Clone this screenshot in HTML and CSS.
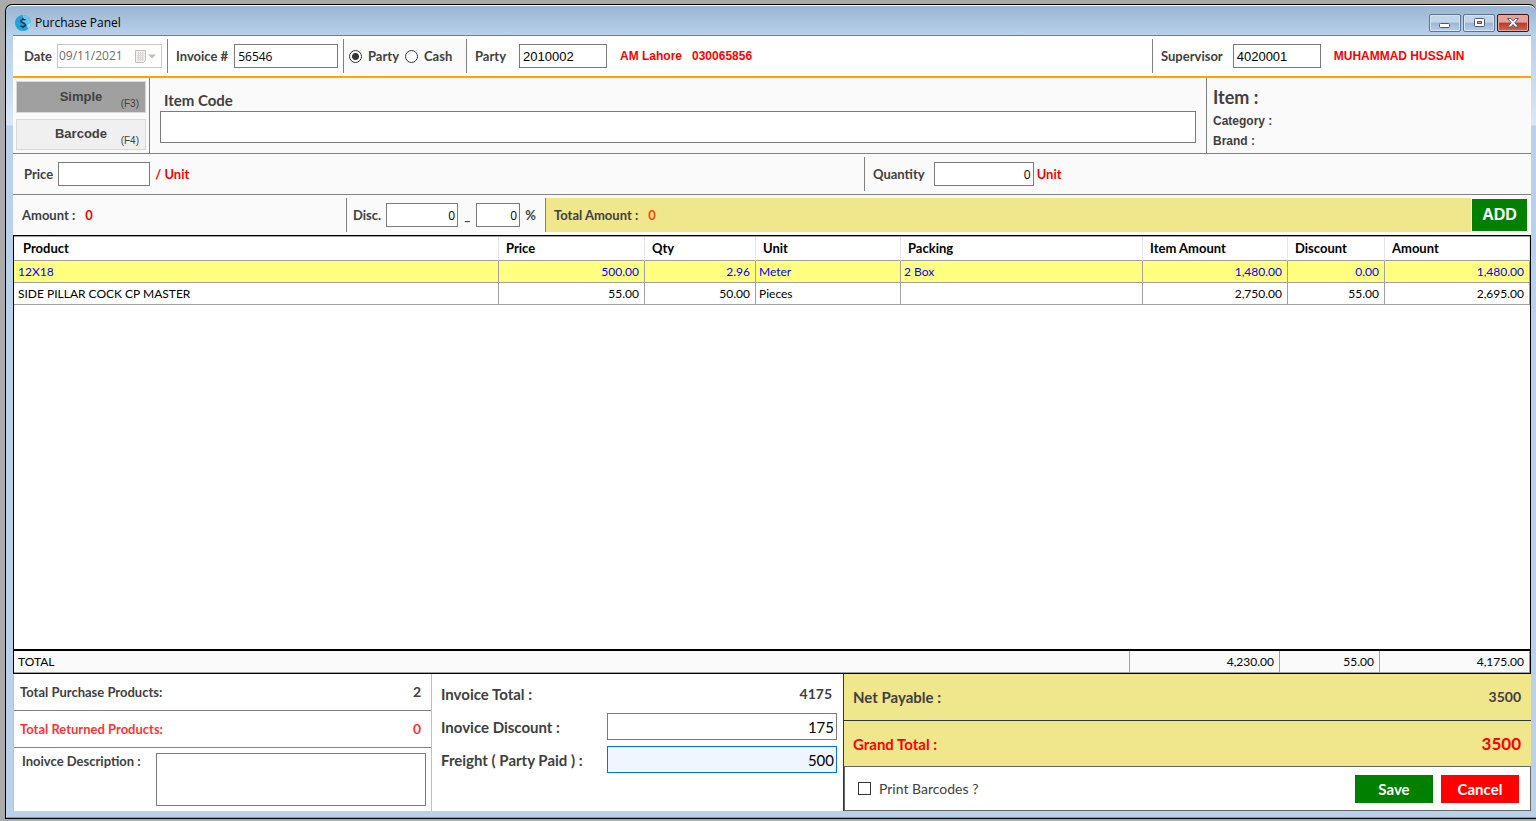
FILE: index.html
```html
<!DOCTYPE html>
<html lang="en">
  <head>
    <meta charset="UTF-8" />
    <meta name="viewport" content="width=device-width, initial-scale=1.0" />
    <title>Purchase Panel</title>
    <link rel="stylesheet" href="styles.css">
  </head>
  <body>
    <div class="window">
      <header class="titlebar">
        <svg class="logo" width="16" height="16" viewBox="0 0 16 16">
          <circle cx="8" cy="8" r="8" fill="#1fa3d8" />
          <path d="M8 0a8 8 0 0 1 8 8l-3 2-5-2z" fill="#6cc5e8" />
          <path d="M16 8a8 8 0 0 1-3 6l-1-4z" fill="#b5e0f2" />
          <path d="M10.4 5.2C9.8 4.2 6 3.8 5.8 6c-.1 2 4.7 1.6 4.6 3.9C10.3 12 6.4 12 5.4 10.6M8 3v1.5M8 11.500V13" fill="none" stroke="#16365c" stroke-width="1.5" />
        </svg>
        <span class="title">Purchase Panel</span>
        <div class="win-buttons">
          <button class="win-btn" type="button" aria-label="Minimize">
            <svg width="12" height="10" viewBox="0 0 12 10"><rect x="0.5" y="5.5" width="10" height="4" rx="1" fill="#fff" stroke="#535666" /></svg>
          </button>
          <button class="win-btn" type="button" aria-label="Maximize">
            <svg width="11" height="10" viewBox="0 0 11 10"><rect x="0.5" y="0.5" width="10" height="8" rx="1" fill="#fff" stroke="#535666" /><rect x="3.5" y="3.5" width="4" height="2" fill="#9fb9d6" stroke="#535666" /></svg>
          </button>
          <button class="win-btn close" type="button" aria-label="Close">
            <svg width="12" height="10" viewBox="0 0 12 10"><path d="M.5.5h3.200L6 2.900 8.300.5h3.200L7.900 4.700l3.600 4.300H8.200L6 6.600 3.800 9H.5l3.600-4.300z" fill="#fff" stroke="#535666" /></svg>
          </button>
        </div>
      </header>

      <main class="content">
        <section class="row invoice-row">
          <div class="seg date-seg">
            <label for="date">Date</label>
            <div class="date-box">
              <input id="date" type="text" value="09/11/2021" disabled />
              <svg width="21" height="13" viewBox="0 0 21 13">
                <path d="M.5.5h10v10l-2 2h-8z" fill="#f4f0f0" stroke="#c4bcbc" />
                <path d="M2 3.500h7M2 5.500h7M2 7.500h7M2 9.500h7M3.500 2v9M5.500 2v9M7.500 2v9" stroke="#ddd6d6" />
                <path d="M13 4.500h8l-4 4z" fill="#bfbfb8" />
              </svg>
            </div>
          </div>
          <div class="seg invoice-seg">
            <label for="invoice">Invoice #</label>
            <input id="invoice" class="box wide-digits" type="text" value="56546" />
          </div>
          <div class="seg type-seg">
            <input id="typeParty" type="radio" name="type" checked />
            <label for="typeParty">Party</label>
            <input id="typeCash" type="radio" name="type" />
            <label for="typeCash">Cash</label>
          </div>
          <div class="seg party-seg">
            <label for="party">Party</label>
            <input id="party" class="box code" type="text" value="2010002" />
            <span class="account">AM Lahore &nbsp; 030065856</span>
          </div>
          <div class="seg supervisor-seg">
            <label for="supervisor">Supervisor</label>
            <input id="supervisor" class="box code" type="text" value="4020001" />
            <span class="account">MUHAMMAD HUSSAIN</span>
          </div>
        </section>

        <section class="row item-row">
          <div class="modes">
            <button class="mode active" type="button">Simple <span class="key">(F3)</span></button>
            <button class="mode" type="button">Barcode <span class="key">(F4)</span></button>
          </div>
          <div class="item-code">
            <label for="itemCode">Item Code</label>
            <input id="itemCode" class="box" type="text" />
          </div>
          <div class="item-info">
            <div class="item-name">Item :</div>
            <div>Category :</div>
            <div>Brand :</div>
          </div>
        </section>

        <section class="row price-row">
          <div class="seg price-seg">
            <label for="price">Price</label>
            <input id="price" class="box" type="text" />
            <span class="red">/ Unit</span>
          </div>
          <div class="seg quantity-seg">
            <label for="quantity">Quantity</label>
            <input id="quantity" class="box num" type="text" value="0" />
            <span class="red">Unit</span>
          </div>
        </section>

        <section class="row amount-row">
          <div class="seg amount-seg">Amount : <span class="red">0</span></div>
          <div class="seg disc-seg">
            <label for="disc">Disc.</label>
            <input id="disc" class="box num" type="text" value="0" />
            <span class="dash">_</span>
            <input id="discPercent" class="box num percent" type="text" value="0" aria-label="Discount percent" />
            <label for="discPercent">%</label>
          </div>
          <div class="seg total-seg">Total Amount : <span class="orange">0</span></div>
          <button class="add-btn" type="button">ADD</button>
        </section>

        <section class="grid">
          <table class="items">
            <colgroup>
              <col />
              <col class="c-price" />
              <col class="c-qty" />
              <col class="c-unit" />
              <col class="c-packing" />
              <col class="c-item-amount" />
              <col class="c-discount" />
              <col class="c-amount" />
            </colgroup>
            <thead>
              <tr>
                <th>Product</th>
                <th>Price</th>
                <th>Qty</th>
                <th>Unit</th>
                <th>Packing</th>
                <th>Item Amount</th>
                <th>Discount</th>
                <th>Amount</th>
              </tr>
            </thead>
            <tbody>
              <tr class="selected">
                <td>12X18</td>
                <td class="right">500.00</td>
                <td class="right">2.96</td>
                <td>Meter</td>
                <td>2 Box</td>
                <td class="right">1,480.00</td>
                <td class="right">0.00</td>
                <td class="right">1,480.00</td>
              </tr>
              <tr>
                <td>SIDE PILLAR COCK CP MASTER</td>
                <td class="right">55.00</td>
                <td class="right">50.00</td>
                <td>Pieces</td>
                <td></td>
                <td class="right">2,750.00</td>
                <td class="right">55.00</td>
                <td class="right">2,695.00</td>
              </tr>
            </tbody>
          </table>
        </section>
        <table class="items totals">
          <colgroup>
            <col />
            <col class="t-item-amount" />
            <col class="t-discount" />
            <col class="t-amount" />
          </colgroup>
          <tbody>
            <tr>
              <td>TOTAL</td>
              <td class="right">4,230.00</td>
              <td class="right">55.00</td>
              <td class="right">4,175.00</td>
            </tr>
          </tbody>
        </table>

        <section class="summary">
          <div class="products">
            <div class="line"><span>Total Purchase Products:</span><span class="value">2</span></div>
            <div class="line returned"><span>Total Returned Products:</span><span class="value">0</span></div>
            <div class="description">
              <label for="description">Inoivce Description :</label>
              <textarea id="description"></textarea>
            </div>
          </div>
          <div class="invoice">
            <div class="line"><span>Invoice Total :</span><span class="value">4175</span></div>
            <div class="line">
              <label for="discount">Inovice Discount :</label>
              <input id="discount" class="box" type="text" value="175" />
            </div>
            <div class="line">
              <label for="freight">Freight ( Party Paid ) :</label>
              <input id="freight" class="box focused" type="text" value="500" />
            </div>
          </div>
          <div class="payable">
            <div class="line"><span>Net Payable :</span><span class="value">3500</span></div>
            <div class="line grand"><span>Grand Total :</span><span class="grand-value">3500</span></div>
            <div class="actions">
              <input id="print" type="checkbox" />
              <label for="print">Print Barcodes ?</label>
              <button class="save" type="button">Save</button>
              <button class="cancel" type="button">Cancel</button>
            </div>
          </div>
        </section>
      </main>
    </div>
  </body>
</html>
```

FILE: styles.css
```css
* {
  box-sizing: border-box;
}
body {
  margin: 0;
  height: 100vh;
  padding: 4px 0 2px 5px;
  background: #ababab;
  font-family: Lato, sans-serif;
  font-size: 13px;
  line-height: 16px;
  font-weight: bold;
  color: #404040;
}
input,
button,
textarea {
  font: inherit;
  color: inherit;
  margin: 0;
}

/* window frame */
.window {
  height: 100%;
  display: flex;
  flex-direction: column;
  padding: 0 5px 7px 7px;
  border: 1px solid #000;
  border-right: 0;
  border-radius: 7px 7px 0 0;
  background: linear-gradient(#99b4d1, #b9d1ea 30px, #dae6f4 120px, #b9d1ea 121px);
  box-shadow: inset 0 1px #fff, inset 0 -1px #35c2e0;
}
.titlebar {
  height: 30px;
  flex: none;
  display: flex;
  align-items: center;
  gap: 4px;
  padding: 5px 2px 0;
}
.title {
  flex: 1;
  font-family: "Open Sans", sans-serif;
  font-size: 12px;
  font-weight: normal;
  color: #000;
}
.win-buttons {
  display: flex;
  gap: 2px;
}
.win-btn {
  width: 32px;
  height: 18px;
  padding: 0;
  display: flex;
  align-items: center;
  justify-content: center;
  border: 1px solid #5e7590;
  border-radius: 2px;
  background: linear-gradient(#c3d5e9 45%, #9bb6d2 50%, #b6d0ea);
  box-shadow: inset 0 0 0 1px #d5e3f2;
}
.win-btn.close {
  border-color: #43141a;
  background: linear-gradient(#e8a29a 45%, #b83a25 50%, #cf6a55);
  box-shadow: inset 0 0 0 1px #e2a79d;
}

/* form rows */
.content {
  flex: 1;
  display: flex;
  flex-direction: column;
  border-top: 1px solid #6d7f93;
  background: #fafafa;
}
.row {
  display: flex;
  flex: none;
  border-bottom: 1px solid #808080;
}
.seg {
  display: flex;
  align-items: center;
  margin: 3px 0;
  height: 34px;
  border-left: 1px solid #808080;
}
.seg:first-child {
  border-left: 0;
}
.box {
  height: 24px;
  padding: 0 3px;
  border: 1px solid #7a7a7a;
  border-radius: 0;
  background: #fff;
  font-weight: normal;
  color: #000;
  outline: 0;
}
.red {
  color: #f00;
}
.orange {
  color: #ff4500;
}
.invoice-row {
  height: 42px;
  background: #fff;
  border-bottom: 2px solid #ffa500;
}
.date-seg {
  width: 154px;
  padding-left: 11px;
  gap: 5px;
}
.date-box {
  width: 105px;
  height: 24px;
  display: flex;
  align-items: center;
  border: 1px solid #c8c8c8;
}
.date-box input {
  width: 77px;
  padding: 0 1px;
  border: 0;
  background: none;
  font-family: "Open Sans", sans-serif;
  font-size: 12px;
  font-weight: normal;
  color: #6d6d6d;
}
.invoice-seg {
  width: 176px;
  padding-left: 8px;
  gap: 6px;
}
.invoice-seg .box {
  width: 104px;
}
.wide-digits,
.num {
  font-family: "Open Sans", sans-serif;
  font-size: 12px;
}
.type-seg {
  width: 123px;
  padding-left: 5px;
  gap: 6px;
  background: #fafafa;
}
.type-seg input {
  appearance: none;
  width: 13px;
  height: 13px;
  border: 1px solid #333;
  border-radius: 50%;
  background: #fff;
}
.type-seg input:checked {
  background: radial-gradient(#333 3px, #fff 4px);
}
.party-seg {
  flex: 1;
  padding-left: 8px;
  gap: 13px;
}
.code {
  width: 88px;
  font-family: "Liberation Sans", sans-serif;
  font-size: 13px;
}
.account {
  font-family: "Liberation Sans", sans-serif;
  font-size: 12px;
  color: #f00;
}
.supervisor-seg {
  width: 379px;
  padding-left: 8px;
  gap: 10px;
}
.supervisor-seg .account {
  padding-left: 3px;
}

/* item code */
.item-row {
  height: 76px;
}
.modes {
  width: 136px;
  padding: 3px;
  display: flex;
  flex-direction: column;
  gap: 6px;
}
.mode {
  height: 32px;
  padding: 0;
  position: relative;
  border: 1px solid #d8d8d8;
  background: #f0f0f0;
  font-family: "Liberation Sans", sans-serif;
}
.mode.active {
  background: #a0a0a0;
}
.key {
  position: absolute;
  right: 6px;
  bottom: 0;
  font-size: 10px;
  font-weight: normal;
}
.item-code {
  flex: 1;
  display: flex;
  flex-direction: column;
  gap: 3px;
  padding: 14px 10px 0;
  border-left: 1px solid #808080;
}
.item-code label {
  padding-left: 4px;
  font-size: 15px;
}
.item-code .box {
  height: 32px;
}
.item-info {
  width: 325px;
  padding: 9px 6px;
  border-left: 1px solid #808080;
  font-family: "Liberation Sans", sans-serif;
  font-size: 12px;
  line-height: 20px;
}
.item-name {
  padding-bottom: 4px;
  font-family: Lato, sans-serif;
  font-size: 18px;
}

/* price and amount */
.price-row {
  height: 41px;
}
.price-seg {
  flex: 1;
  padding-left: 11px;
  gap: 5px;
}
.price-seg .box {
  width: 92px;
}
.quantity-seg {
  width: 667px;
  padding-left: 8px;
  gap: 3px;
}
.quantity-seg label {
  padding-right: 6px;
}
.num {
  width: 72px;
  padding: 0 2px;
  text-align: right;
}
.quantity-seg .num {
  width: 100px;
}
.amount-row {
  height: 40px;
  border-bottom: 0;
}
.amount-seg {
  width: 333px;
  padding-left: 9px;
  gap: 10px;
}
.disc-seg {
  width: 199px;
  padding-left: 6px;
  gap: 5px;
}
.disc-seg .percent {
  width: 44px;
}
.dash {
  padding: 0 1px;
}
.total-seg {
  flex: 1;
  padding-left: 8px;
  gap: 10px;
  background: #f0e68c;
}
.add-btn {
  width: 55px;
  height: 32px;
  margin: 4px 4px 4px 1px;
  padding: 0;
  border: 0;
  background: #008000;
  font-family: "Liberation Sans", sans-serif;
  font-size: 16px;
  color: #fff;
}

/* items table */
.grid {
  flex: 1;
  border: 1px solid #000;
  border-bottom: 0;
  background: #fff;
}
.items {
  width: 100%;
  table-layout: fixed;
  border-collapse: separate;
  border-spacing: 0;
  border-top: 1px solid #a0a0a0;
  color: #000;
}
.items th {
  height: 24px;
  padding: 0 7px 2px;
  text-align: left;
  border-right: 1px solid #e5e5e5;
  border-bottom: 1px solid #a0a0a0;
}
.items th:first-child {
  padding-left: 9px;
}
.items td {
  height: 22px;
  padding: 0 5px 0 3px;
  border-right: 1px solid #a0a0a0;
  border-bottom: 1px solid #a0a0a0;
  font-size: 12px;
  font-weight: normal;
}
.items td:first-child {
  padding-left: 4px;
}
.items .right {
  text-align: right;
}
.selected td {
  background: #ffff80;
  color: #00f;
}
.c-price {
  width: 146px;
}
.c-qty {
  width: 111px;
}
.c-unit,
.c-item-amount,
.c-amount {
  width: 145px;
}
.c-packing {
  width: 242px;
}
.c-discount {
  width: 97px;
}
.totals {
  flex: none;
  border: 1px solid #000;
  border-top-width: 2px;
}
.t-item-amount,
.t-amount {
  width: 150px;
}
.t-discount {
  width: 100px;
}

/* summary */
.summary {
  flex: none;
  display: grid;
  grid-template-columns: 419fr 411fr 688fr;
  background: #fff;
}
.line {
  display: flex;
  align-items: center;
  justify-content: space-between;
}
.products {
  border: 1px solid #c0c0c0;
  border-width: 0 1px;
}
.products .line {
  height: 37px;
  padding: 0 10px 0 6px;
  border-bottom: 1px solid #808080;
}
.value {
  font-size: 14px;
}
.returned {
  color: #f33;
}
.description {
  display: flex;
  justify-content: space-between;
  padding: 5px 5px 5px 8px;
}
.description textarea {
  width: 270px;
  height: 53px;
  border: 1px solid #7a7a7a;
  resize: none;
}
.invoice {
  display: flex;
  flex-direction: column;
  gap: 6px;
  padding: 6px 6px 0 9px;
  font-size: 15px;
}
.invoice .line {
  height: 27px;
}
.invoice .value {
  padding-right: 5px;
}
.invoice .box {
  width: 230px;
  height: 27px;
  padding: 0 2px;
  text-align: right;
}
.invoice .box.focused {
  border-color: #0078d7;
  background: #f0f6ff;
}
.payable {
  display: flex;
  flex-direction: column;
  border-left: 1px solid #2f3547;
  background: #f0e68c;
  font-size: 15px;
}
.payable .line {
  height: 47px;
  padding: 0 10px 0 9px;
  border-bottom: 1px solid #2f3547;
}
.payable .grand {
  height: 45px;
  border-bottom: 0;
  color: #f00;
}
.grand-value {
  font-size: 17px;
}
.actions {
  flex: 1;
  display: flex;
  align-items: center;
  gap: 8px;
  padding: 0 11px 0 13px;
  border: 1px solid #666;
  background: #fff;
}
.actions input {
  appearance: none;
  width: 13px;
  height: 13px;
  border: 1px solid #333;
  background: #fff;
}
.actions label {
  flex: 1;
  font-size: 14px;
  font-weight: normal;
}
.actions button {
  width: 78px;
  height: 28px;
  padding: 0;
  border: 0;
  color: #fff;
}
.save {
  background: #008000;
}
.cancel {
  background: #f00;
}
```
